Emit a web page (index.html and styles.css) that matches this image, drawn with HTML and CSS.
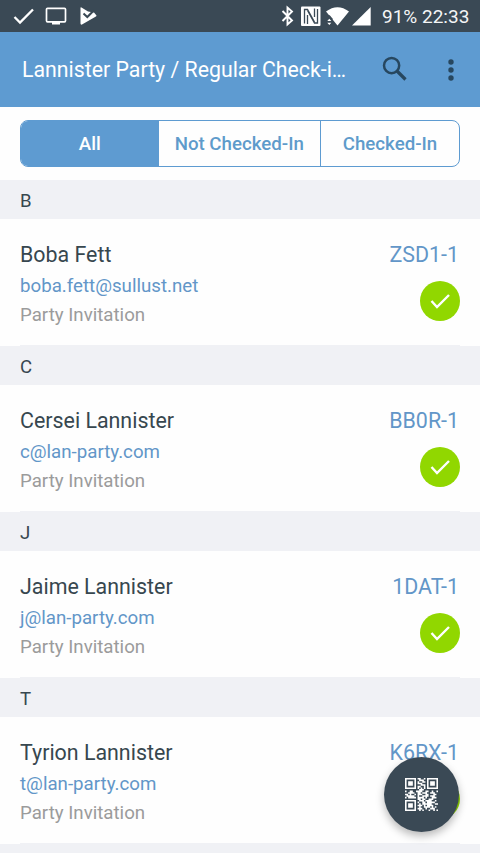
FILE: index.html
```
<!DOCTYPE html>
<html lang="en">
<head>
<meta charset="utf-8">
<title>Check-in</title>
<link rel="stylesheet" href="styles.css">
</head>
<body>
<div class="status">
  <svg class="status-left" width="110" height="32" viewBox="0 0 110 32">
    <path d="M14.500 17l5.500 5.500L33 9.500" fill="none" stroke="#fff" stroke-width="2.300"/>
    <rect x="46.500" y="8.300" width="19" height="13.500" rx="1" fill="none" stroke="#fff" stroke-width="1.700"/>
    <path d="M52 22h8v2.500h-8z" fill="#fff"/>
    <path d="M80.500 8Q80.500 7 81.500 7.500L88 11.500L94 12.500L96.500 15.500Q96.500 16.300 95.500 16.800L82 24.500Q80.500 25 80.500 23.500z" fill="#fff"/>
    <path d="M83.500 13.500l3.800 3.500 6.500-6.500" fill="none" stroke="#3a4955" stroke-width="2"/>
  </svg>
  <svg class="status-icons" width="100" height="32" viewBox="275 0 100 32">
    <path d="M282.500 11l9.500 9.500-4.500 4V7.500l4.500 4-9.500 9.500" fill="none" stroke="#fff" stroke-width="1.900"/>
    <rect x="301" y="6.500" width="19.500" height="19.500" rx="1" fill="#fff"/>
    <path d="M304.500 23.500V9.500h3l7 12.500M317.500 9v14h-3l-7-12.500M307.500 15v9M314.500 8.500V17" fill="none" stroke="#3a4955" stroke-width="1.300"/>
    <path d="M326 11.500Q337.500 3 349 11.500L337.500 25.500z" fill="#fff"/>
    <path d="M326.500 18.500l3-3.500 3 3.500v7h-6z" fill="#3a4955"/>
    <path d="M327.300 21l2-2.200 2 2.200zM327.300 22.700h4l-2 2.200z" fill="#fff"/>
    <path d="M352 25.500L370.700 7v18.500z" fill="#fff"/>
  </svg>
  <span class="battery">91%</span>
  <span class="clock">22:33</span>
</div>
<header class="bar">
  <h1>Lannister Party / Regular Check-i…</h1>
  <svg class="search" width="26" height="26" viewBox="0 0 26 26"><circle cx="9.600" cy="9.600" r="7.600" fill="none" stroke="#27475f" stroke-width="2.500"/><path d="M15 15l8.500 8.500" stroke="#27475f" stroke-width="3.200"/></svg>
  <svg class="more" width="6" height="22" viewBox="0 0 6 22" fill="#27475f"><circle cx="3" cy="3" r="2.700"/><circle cx="3" cy="11" r="2.700"/><circle cx="3" cy="19" r="2.700"/></svg>
</header>
<nav class="tabs">
  <div class="tab tab-all">All</div>
  <div class="tab tab-not">Not Checked-In</div>
  <div class="tab tab-in">Checked-In</div>
</nav>
<main>
  <h2 class="letter">B</h2>
  <section class="guest">
    <div class="info"><div class="name">Boba Fett</div><div class="mail">boba.fett@sullust.net</div><div class="kind">Party Invitation</div></div>
    <div class="side"><div class="code">ZSD1-1</div><svg class="check" viewBox="0 0 40 40"><circle cx="20" cy="20" r="20"/><path d="M11.500 20l5.500 6L29 14"/></svg></div>
  </section>
  <h2 class="letter">C</h2>
  <section class="guest">
    <div class="info"><div class="name">Cersei Lannister</div><div class="mail">c@lan-party.com</div><div class="kind">Party Invitation</div></div>
    <div class="side"><div class="code">BB0R-1</div><svg class="check" viewBox="0 0 40 40"><circle cx="20" cy="20" r="20"/><path d="M11.500 20l5.500 6L29 14"/></svg></div>
  </section>
  <h2 class="letter">J</h2>
  <section class="guest">
    <div class="info"><div class="name">Jaime Lannister</div><div class="mail">j@lan-party.com</div><div class="kind">Party Invitation</div></div>
    <div class="side"><div class="code">1DAT-1</div><svg class="check" viewBox="0 0 40 40"><circle cx="20" cy="20" r="20"/><path d="M11.500 20l5.500 6L29 14"/></svg></div>
  </section>
  <h2 class="letter">T</h2>
  <section class="guest">
    <div class="info"><div class="name">Tyrion Lannister</div><div class="mail">t@lan-party.com</div><div class="kind">Party Invitation</div></div>
    <div class="side"><div class="code">K6RX-1</div><svg class="check" viewBox="0 0 40 40"><circle cx="20" cy="20" r="20"/><path d="M11.500 20l5.500 6L29 14"/></svg></div>
  </section>
  <div class="letter"></div>
</main>
<div class="scan">
  <svg width="33" height="33" viewBox="0 0 21 21">
    <path d="M.5.500h6v6h-6zM14.500.500h6v6h-6zM.5 14.500h6v6h-6z" fill="none" stroke="#fff"/>
    <path d="M2 2h3v3h-3zM16 2h3v3h-3zM2 16h3v3h-3z" fill="#fff"/>
    <path d="M8 .5h2m2 0h1M9 1.500h3M8 2.500h1m2 0h2M8 3.500h3M10 4.500h3M8 5.500h2m2 0h1M8 6.500h1m1 0h1m1 0h1M9 7.500h3M0 8.500h1m2 0h2m2 0h4m2 0h2m2 0h1m2 0h1M2 9.500h4m2 0h2m1 0h3m2 0h3M0 10.500h2m1 0h1m2 0h1m1 0h3m2 0h2m3 0h2M1 11.500h5m2 0h1m2 0h4m1 0h3M0 12.500h1m1 0h5m1 0h4m1 0h1m3 0h3M8 13.500h2m1 0h2m2 0h3M9 14.500h3m1 0h4m2 0h1M8 15.500h1m2 0h2m1 0h5M9 16.500h1m1 0h6m2 0h2M8 17.500h3m1 0h1m1 0h4M9 18.500h1m2 0h4m1 0h1m1 0h1M8 19.500h3m2 0h1m2 0h3M9 20.500h1m1 0h1m3 0h1m2 0h1m1 0h1" stroke="#fff"/>
  </svg>
</div>
</body>
</html>
```
FILE: styles.css
```
* { box-sizing: border-box; }
body {
  margin: 0;
  height: 853px;
  overflow: hidden;
  background: #fefefe;
  font-family: Roboto, "Liberation Sans", sans-serif;
  color: #37474f;
}
h1, h2 { margin: 0; font-weight: 400; }
svg { display: block; flex: none; }
.status {
  display: flex;
  align-items: center;
  height: 32px;
  background: #3a4955;
  color: #f4f6f7;
  font-size: 19px;
  white-space: nowrap;
}
.status-icons { margin-left: 165px; }
.battery { width: 40px; margin-left: 7px; }
.bar {
  display: flex;
  align-items: center;
  height: 75px;
  padding-left: 22px;
  background: #5e9bd1;
}
.bar h1 { width: 360px; padding-top: 1px; font-size: 21.3px; line-height: 30px; color: #fff; white-space: nowrap; }
.search { margin-top: -1px; }
.more { margin-left: 39.500px; }
.tabs {
  display: flex;
  height: 47px;
  margin: 13px 20px;
  border: 1px solid #5e9bd1;
  border-radius: 8px;
  overflow: hidden;
  font-size: 18.7px;
  font-weight: 500;
  color: #5e9bcb;
}
.tab { display: flex; align-items: center; justify-content: center; padding-top: 1px; white-space: nowrap; }
.tab-all { width: 137.500px; background: #5e9bd1; color: #fff; }
.tab-not { width: 162.500px; border-right: 1px solid #5e9bd1; }
.tab-in { flex: 1; }
.letter {
  height: 39px;
  padding-left: 20px;
  background: #f0f1f5;
  font-size: 18.6px;
  line-height: 42px;
}
.guest {
  display: flex;
  justify-content: space-between;
  height: 127.100px;
  margin: 0 20px;
  padding-top: 21px;
  border-bottom: 1px solid #f0f1f5;
  white-space: nowrap;
}
.name, .code { font-size: 21.4px; line-height: 30px; }
.mail { margin-top: 2px; font-size: 18.7px; line-height: 28px; }
.kind { margin-top: 1px; font-size: 18.7px; line-height: 28px; color: #9b9b9b; }
.mail, .code { color: #6296c8; }
.side { display: flex; flex-direction: column; align-items: flex-end; }
.code { margin-right: 1px; }
.check { width: 40px; height: 40px; margin-top: 10.500px; fill: #91d700; }
.check path { fill: none; stroke: #fff; stroke-width: 2.400; }
.scan {
  position: fixed;
  right: 21px;
  bottom: 21px;
  display: flex;
  align-items: center;
  justify-content: center;
  width: 75px;
  height: 75px;
  border-radius: 50%;
  background: #3a4955;
  box-shadow: 0 4px 9px rgba(0, 0, 0, .28);
}
```
